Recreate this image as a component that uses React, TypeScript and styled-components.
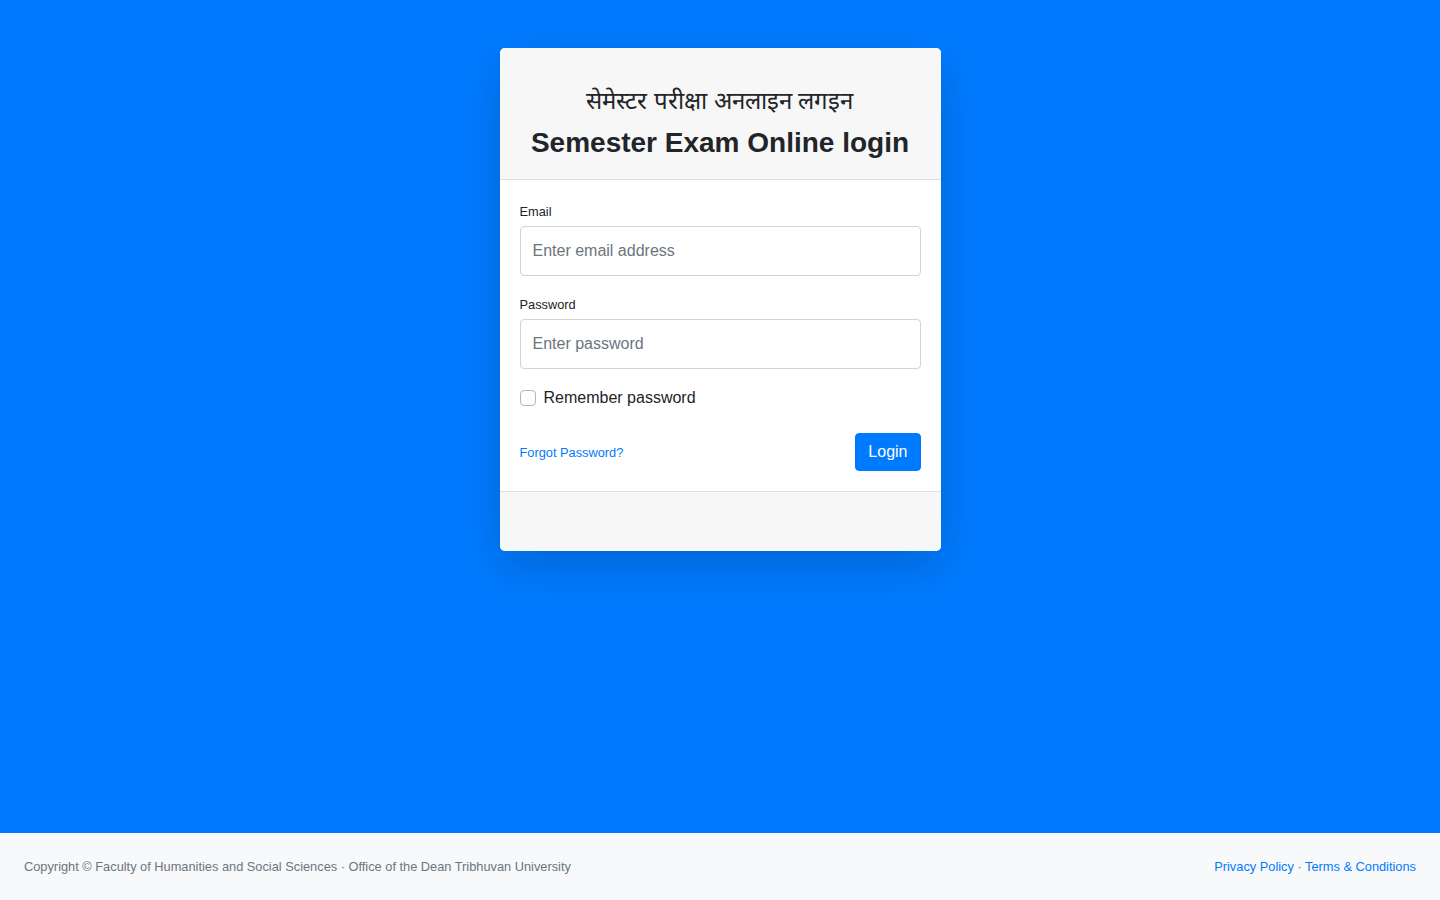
import React from "react";
import styled, { createGlobalStyle } from "styled-components";

const GlobalStyle = createGlobalStyle`
  * {
    box-sizing: border-box;
  }
  html,
  body {
    margin: 0;
    padding: 0;
  }
  body {
    font-family: "Liberation Sans", Arial, sans-serif;
    font-size: 16px;
    line-height: 1.5;
    color: #212529;
    background-color: #ffffff;
  }
`;

function App() {
  return (
    <>
      <GlobalStyle />
      <Layout>
        <Main>
          <Card>
            <CardHeader>
              <NepaliTitle>सेमेस्टर परीक्षा अनलाइन लगइन</NepaliTitle>
              <Title>Semester Exam Online login</Title>
            </CardHeader>
            <CardBody>
              <FormGroup $gap={17}>
                <Label htmlFor="email">Email</Label>
                <Input id="email" type="email" placeholder="Enter email address" />
              </FormGroup>
              <FormGroup $gap={16}>
                <Label htmlFor="password">Password</Label>
                <Input id="password" type="password" placeholder="Enter password" />
              </FormGroup>
              <FormGroup $gap={22}>
                <CheckRow>
                  <CheckBox type="checkbox" id="remember" />
                  <CheckLabel htmlFor="remember">Remember password</CheckLabel>
                </CheckRow>
              </FormGroup>
              <ActionRow>
                <SmallLink href="#">Forgot Password?</SmallLink>
                <LoginBtn type="button">Login</LoginBtn>
              </ActionRow>
            </CardBody>
            <CardFooter />
          </Card>
        </Main>
        <Footer>
          <FooterText>
            Copyright &copy; Faculty of Humanities and Social Sciences &middot; Office of the Dean Tribhuvan University
          </FooterText>
          <FooterLinks>
            <FooterLink href="#">Privacy Policy</FooterLink> &middot;{" "}
            <FooterLink href="#">Terms &amp; Conditions</FooterLink>
          </FooterLinks>
        </Footer>
      </Layout>
    </>
  );
}

export default App;

const Layout = styled.div`
  min-height: 100vh;
  display: flex;
  flex-direction: column;
`;

const Main = styled.main`
  flex: 1;
  background-color: #007bff;
  display: flex;
  justify-content: center;
  align-items: flex-start;
  padding-top: 48px;
`;

const Card = styled.div`
  width: 441px;
  background-color: #ffffff;
  border-radius: 5px;
  overflow: hidden;
  box-shadow: 0 16px 48px rgba(0, 0, 0, 0.175);
`;

const CardHeader = styled.div`
  background-color: #f7f7f7;
  border-bottom: 1px solid #dfdfdf;
  padding: 39px 20px 20px;
  text-align: center;
`;

const NepaliTitle = styled.div`
  font-size: 24px;
  font-weight: 400;
  line-height: 1.2;
  color: #212529;
`;

const Title = styled.h3`
  margin: 10px 0 0;
  font-size: 28px;
  font-weight: 700;
  line-height: 1.2;
  color: #212529;
`;

const CardBody = styled.div`
  padding: 20px;
`;

const FormGroup = styled.div<{ $gap: number }>`
  margin-bottom: ${(props) => props.$gap}px;
`;

const Label = styled.label`
  display: block;
  font-size: 12.8px;
  line-height: 24px;
  margin-bottom: 2px;
  color: #212529;
`;

const Input = styled.input`
  display: block;
  width: 100%;
  height: 50px;
  padding: 0 12px;
  font-family: "Liberation Sans", Arial, sans-serif;
  font-size: 16px;
  color: #495057;
  background-color: #ffffff;
  border: 1px solid #ced4da;
  border-radius: 4px;
  outline: none;
  &::placeholder {
    color: #6c757d;
  }
`;

const CheckRow = styled.div`
  display: flex;
  align-items: center;
  height: 26px;
`;

const CheckBox = styled.input`
  appearance: none;
  width: 16px;
  height: 16px;
  margin: 0 8px 0 0;
  border: 1px solid #adb5bd;
  border-radius: 4px;
  background-color: #ffffff;
`;

const CheckLabel = styled.label`
  font-size: 16px;
  color: #212529;
`;

const ActionRow = styled.div`
  display: flex;
  justify-content: space-between;
  align-items: center;
`;

const SmallLink = styled.a`
  font-size: 12.8px;
  color: #007bff;
  text-decoration: none;
`;

const LoginBtn = styled.button`
  height: 38px;
  padding: 0 12px;
  font-family: "Liberation Sans", Arial, sans-serif;
  font-size: 16px;
  color: #ffffff;
  background-color: #007bff;
  border: 1px solid #007bff;
  border-radius: 4px;
`;

const CardFooter = styled.div`
  height: 60px;
  background-color: #f7f7f7;
  border-top: 1px solid #dfdfdf;
`;

const Footer = styled.footer`
  background-color: #f8f9fa;
  padding: 24px;
  display: flex;
  justify-content: space-between;
  align-items: center;
  font-size: 12.8px;
  line-height: 1.5;
`;

const FooterText = styled.div`
  color: #6c757d;
`;

const FooterLinks = styled.div`
  color: #6c757d;
`;

const FooterLink = styled.a`
  color: #007bff;
  text-decoration: none;
`;
